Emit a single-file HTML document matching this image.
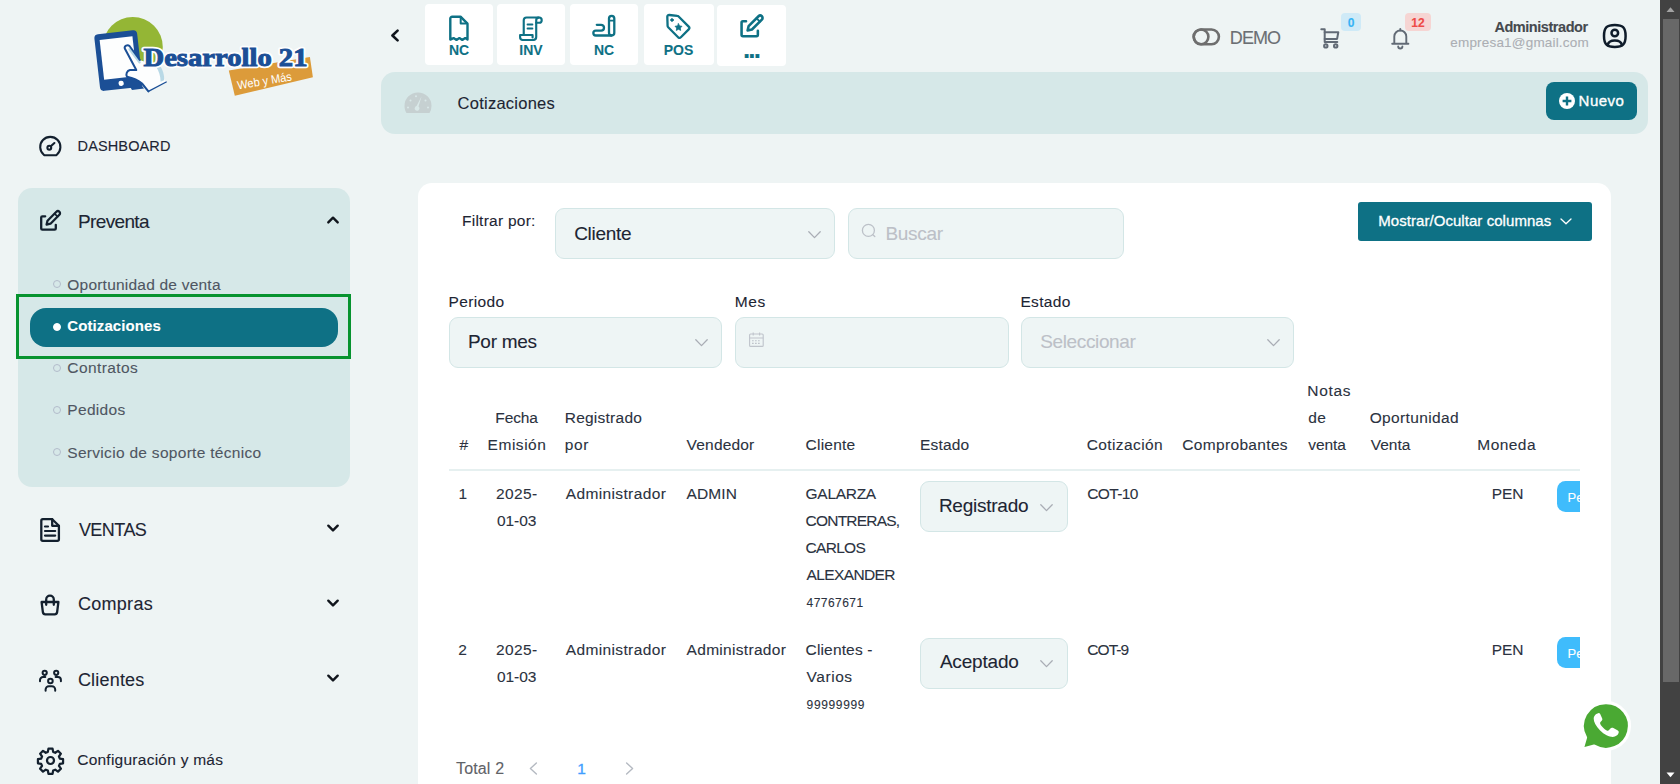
<!DOCTYPE html>
<html lang="es">
<head>
<meta charset="utf-8">
<title>Cotizaciones</title>
<style>
*{box-sizing:border-box;margin:0;padding:0}
html,body{width:1680px;height:784px;overflow:hidden}
body{background:#eef4f4;font-family:"Liberation Sans",sans-serif;color:#1b2433;position:relative;font-size:14px}
.abs{position:absolute}
svg{display:block}
.t{position:absolute;white-space:nowrap;line-height:1;-webkit-text-stroke:0.1px currentColor}
/* sidebar */
#grp{left:18px;top:188px;width:332px;height:299px;background:#d6e8e8;border-radius:14px}
.mi{font-size:17px;color:#1b2433;left:78px}
.sub{font-size:15px;color:#555e66;left:67px}
.dot{position:absolute;left:52.800px;width:8px;height:8px;border:1px solid #b3bccb;border-radius:50%}
#act{left:30px;top:307.500px;width:308.300px;height:39.300px;background:#0e7185;border-radius:16px}
#gbox{left:16px;top:294px;width:335px;height:65px;border:3px solid #06932f}
/* top */
.qb{position:absolute;top:3.500px;width:68px;height:61px;background:#fff;border-radius:4px}
.qb .t{font-weight:bold;font-size:14px;color:#0e7185;left:0;width:68px;text-align:center;top:39px}
.qb svg{position:absolute;left:22px;top:10px}
#bar{left:381px;top:72px;width:1266.500px;height:62px;background:#d6e8e8;border-radius:14px}
#nuevo{left:1546px;top:82px;width:91px;height:38px;background:#0e7185;border-radius:8px}
/* card */
#card{left:418px;top:183px;width:1193px;height:620px;background:#fff;border-radius:14px}
.inp{position:absolute;height:51px;background:#eef5f5;border:1px solid #d3e6e6;border-radius:9px}
.inp .t{font-size:18px;top:16px;left:19px;color:#1b2433}
.inp .ph{color:#b9bec3}
.lbl{font-size:15px;color:#1b2433}
.th{font-size:14.5px;color:#2a3140;line-height:27px;position:absolute;white-space:nowrap}
.td{font-size:14.5px;color:#2a3140;line-height:27px;position:absolute;white-space:nowrap}
.sm{font-size:11px}
.tag{position:absolute;left:1556.500px;width:23.500px;height:31px;background:#3fbcfc;border-radius:8.500px 0 0 8.500px;overflow:hidden}
.tag .t{color:#fff;font-size:13px;left:11px;top:9.500px}
/* scrollbar */
#sb{left:1660px;top:0;width:20px;height:784px;background:#424242}
#sbt{left:1662.500px;top:19px;width:16px;height:662.500px;background:#686868}
</style>
</head>
<body>
<!-- SIDEBAR -->
<svg class="abs" style="left:80px;top:8px" width="250" height="100" viewBox="0 0 250 100">
<circle cx="52.800" cy="39" r="30" fill="#94b635"/>
<g transform="rotate(-6.5 39 52)">
<rect x="17" y="24" width="43" height="57" rx="4" fill="#1b4f96"/>
<rect x="22" y="30" width="33" height="40" fill="#fdfefe"/>
<circle cx="38.5" cy="75.5" r="2.6" fill="#fff"/>
</g>
<path d="M44.800 40.500C44 38 47.500 36.300 49.500 38L59.800 52L77 58L86.200 74L68.400 83.400L62 75.500C58 72 52 69.800 47 68.800C45.500 66 47 62.500 50 62L56.300 62Z" fill="#fdfefe"/>
<path d="M76 58.500L80 57.400C83 62 84.500 67 84.200 72.200L80.600 73.800C80.500 68 79 63 76 58.500Z" fill="#b9d9e6"/>
<path d="M49.600 41.200L59.500 54.300" stroke="#b9d9e6" stroke-width="2.400" stroke-linecap="round"/>
<path d="M59.800 52L49.500 38C47.500 36.300 44 38 44.800 40.500L56.300 62L50 62C47 62.500 45.500 66 47 68.800C52 69.800 58 72 62 75.500L68.400 83.400" fill="none" stroke="#1b4f96" stroke-width="2" stroke-linejoin="round" stroke-linecap="round"/>
<path d="M68.400 83.400L86.200 74" fill="none" stroke="#1b4f96" stroke-width="1.300" stroke-linecap="round"/>
<path d="M47.500 69.500C53 70.500 58 73 61 76.500L64 80.500L52 82L46 72Z" fill="#1b4f96"/>
<polygon points="148.8,62.5 229.9,49.1 232.9,69.2 154.8,87.8" fill="#dc9b3a"/>
<text x="63.5" y="57.8" font-family="'Liberation Serif',serif" font-weight="bold" font-size="26" fill="#fdfefe" stroke="#fdfefe" stroke-width="4.5" stroke-linejoin="round" textLength="164" lengthAdjust="spacingAndGlyphs">Desarrollo 21</text>
<text x="63.5" y="57.8" font-family="'Liberation Serif',serif" font-weight="bold" font-size="26" fill="#1b4f96" stroke="#1b4f96" stroke-width="1" textLength="164" lengthAdjust="spacingAndGlyphs">Desarrollo 21</text>
<text transform="translate(158 81.5) rotate(-9.5)" font-family="'Liberation Sans',sans-serif" font-size="12" fill="#fff" textLength="55" lengthAdjust="spacingAndGlyphs">Web y Más</text>
</svg>
<div id="grp" class="abs"></div>
<div class="dot" style="top:280.300px"></div>
<div id="gbox" class="abs"></div>
<div id="act" class="abs"></div>
<div class="dot" style="top:322.600px;background:#fff;border-color:#fff"></div>
<div class="dot" style="top:364.300px"></div>
<div class="dot" style="top:406.300px"></div>
<div class="dot" style="top:448.300px"></div>


<!-- sidebar icons -->
<svg class="abs" style="left:38px;top:134px" width="24" height="24" viewBox="0 0 24 24" fill="none" stroke="#13202e" stroke-width="2.1" stroke-linecap="round" stroke-linejoin="round">
<path d="M7.2 21.3h10.2c.6 0 1-.2 1.4-.6a10.1 10.1 0 1 0-13 0c.4.4.8.6 1.4.6z"/>
<circle cx="11.3" cy="13.7" r="1.9"/><path d="M12.8 12.3l3.6-3.3"/>
</svg>
<svg class="abs" style="left:38px;top:208px" width="26" height="26" viewBox="0 0 26 26" fill="none" stroke="#13202e" stroke-width="2.3" stroke-linecap="round" stroke-linejoin="round">
<path d="M7.2 8.3H4.4a1.2 1.2 0 0 0-1.2 1.2v11a1.2 1.2 0 0 0 1.2 1.2h12.2a1.2 1.2 0 0 0 1.200-1.2v-3.700"/>
<path d="M8.600 16.600l.9-3.900 8.900-8.900a2.100 2.100 0 0 1 3 3l-8.900 8.900z"/>
<path d="M16.600 5.600l3 3" stroke-width="1.600"/>
</svg>
<svg class="abs" style="left:38px;top:516px" width="24" height="28" viewBox="0 0 24 28" fill="none" stroke="#13202e" stroke-width="2.3" stroke-linecap="round" stroke-linejoin="round">
<path d="M14.200 3.200H4.800a1.500 1.500 0 0 0-1.500 1.500v18.600a1.500 1.500 0 0 0 1.500 1.500h14.600a1.500 1.500 0 0 0 1.500-1.500V9.800z"/>
<path d="M14.200 3.200v6.600h6.700"/>
<path d="M7 10.500h3M7 15h10.200M7 19.600h10.200" stroke-width="2.200"/>
</svg>
<svg class="abs" style="left:38px;top:592px" width="24" height="26" viewBox="0 0 24 26" fill="none" stroke="#13202e" stroke-width="2.300" stroke-linecap="round" stroke-linejoin="round">
<path d="M3.600 10h16.800l-1.300 10.300a2.500 2.500 0 0 1-2.500 2.100H7.400a2.500 2.500 0 0 1-2.500-2.100z"/>
<path d="M8.200 12.800V7.400a3.800 3.800 0 0 1 7.600 0v5.400"/>
</svg>
<svg class="abs" style="left:37px;top:667px" width="27" height="27" viewBox="0 0 27 27" fill="none" stroke="#13202e" stroke-width="2" stroke-linecap="round" stroke-linejoin="round">
<circle cx="7.700" cy="5.800" r="2.100"/><circle cx="19.200" cy="5.800" r="2.100"/><circle cx="13.400" cy="14" r="2.300"/>
<path d="M3 14.300v-1.200a3 3 0 0 1 3-3h2.300M23.900 14.300v-1.200a3 3 0 0 0-3-3h-2.300M8.600 23.800v-1.300a3.300 3.300 0 0 1 3.300-3.300h3a3.300 3.300 0 0 1 3.300 3.300v1.300"/>
</svg>
<svg class="abs" style="left:36px;top:746px" width="29" height="29" viewBox="0 0 24 24" fill="none" stroke="#13202e" stroke-width="1.850" stroke-linecap="round" stroke-linejoin="round">
<circle cx="12" cy="12" r="2.900"/>
<path d="M10.300 2.200h3.400l.5 2.700 1.700.7 2.300-1.600 2.400 2.400-1.600 2.300.7 1.700 2.700.5v3.400l-2.700.5-.7 1.700 1.600 2.300-2.400 2.400-2.300-1.600-1.700.7-.5 2.700h-3.400l-.5-2.700-1.700-.7-2.300 1.600-2.400-2.400 1.600-2.300-.7-1.700-2.700-.5v-3.400l2.700-.5.7-1.700-1.600-2.300 2.400-2.400 2.300 1.600 1.700-.7z"/>
</svg>
<!-- chevrons -->
<svg class="abs" style="left:326px;top:215px" width="14" height="10" viewBox="0 0 14 10" fill="none" stroke="#10151c" stroke-width="2.400" stroke-linecap="round" stroke-linejoin="round"><path d="M2.300 7.400L7 2.700l4.700 4.700"/></svg>
<svg class="abs" style="left:326px;top:523px" width="14" height="10" viewBox="0 0 14 10" fill="none" stroke="#10151c" stroke-width="2.400" stroke-linecap="round" stroke-linejoin="round"><path d="M2.300 2.700L7 7.400l4.700-4.700"/></svg>
<svg class="abs" style="left:326px;top:598px" width="14" height="10" viewBox="0 0 14 10" fill="none" stroke="#10151c" stroke-width="2.400" stroke-linecap="round" stroke-linejoin="round"><path d="M2.300 2.700L7 7.400l4.700-4.700"/></svg>
<svg class="abs" style="left:326px;top:673px" width="14" height="10" viewBox="0 0 14 10" fill="none" stroke="#10151c" stroke-width="2.400" stroke-linecap="round" stroke-linejoin="round"><path d="M2.300 2.700L7 7.400l4.700-4.700"/></svg>
<svg class="abs" style="left:388.500px;top:28.300px" width="12" height="15" viewBox="0 0 12 15" fill="none" stroke="#10151c" stroke-width="2.600" stroke-linecap="round" stroke-linejoin="round"><path d="M8.600 2.600L3.400 7.500l5.200 4.900"/></svg>

<!-- TOPBAR -->
<div class="qb" style="left:425px"><svg width="24" height="29" viewBox="0 0 24 29" style="left:22px;top:9px" fill="none" stroke="#0e7185" stroke-width="2.400" stroke-linejoin="round" stroke-linecap="round"><path d="M3.300 26.600V5.600a1.900 1.900 0 0 1 1.900-1.900h8.300l7 7v15.900l-2.300-1.500-2.900 1.800-2.900-1.800-2.900 1.800-2.900-1.800z"/><path d="M13.700 4.200v6.300h6.300" stroke-width="2"/></svg><div class="t">NC</div></div>
<div class="qb" style="left:497px"><svg width="28" height="27" viewBox="0 0 30 29" style="left:20px;top:10px" fill="none" stroke="#0e7185" stroke-width="2.300" stroke-linejoin="round" stroke-linecap="round"><path d="M7.200 22.600V6.800a3 3 0 0 1 3-3h13.500a2.800 2.800 0 0 1 0 5.600h-3.100v15.400a3.100 3.100 0 0 1-3.100 3.100H6.200a2.900 2.900 0 0 1-2.900-2.900v-2.400h13.400v2.600"/><path d="M20.600 9.400V6.600a2.700 2.700 0 0 1 2.600-2.700"/><path d="M11.300 11.200h5.200M11.300 15.600h5.200" stroke-width="2.100"/></svg><div class="t">INV</div></div>
<div class="qb" style="left:570px"><svg width="28" height="28" viewBox="0 0 28 28" style="left:19.700px;top:5px" fill="none" stroke="#0e7185" stroke-width="2.300" stroke-linejoin="round" stroke-linecap="round"><rect x="19" y="6.900" width="5.300" height="19.600" rx="2.650"/><path d="M19.300 11.600h4.700" stroke-width="1.800"/><path d="M6.800 15.800h4.300a2.900 2.900 0 0 1 0 5.800H5.800a2.450 2.450 0 0 0 0 4.900h15.500"/></svg><div class="t">NC</div></div>
<div class="qb" style="left:643.500px;width:70px"><svg width="30" height="30" viewBox="0 0 30 30" style="left:19.500px;top:5.700px" fill="none" stroke="#0e7185" stroke-width="2.300" stroke-linejoin="round" stroke-linecap="round"><path d="M4.300 7.800l.300 9.200a2 2 0 0 0 .6 1.300l9.900 9.900a2 2 0 0 0 2.800 0l7.800-7.800a2 2 0 0 0 0-2.800L15.600 7.500a2 2 0 0 0-1.300-.6l-8-.900a1.800 1.800 0 0 0-2 1.800z"/><circle cx="9" cy="11" r="1.300" fill="#0e7185" stroke-width="1"/><path d="M15.500 14.700l1.100 2.200 2.400.4-1.700 1.700.4 2.400-2.200-1.100-2.200 1.100.4-2.400-1.700-1.700 2.400-.4z" fill="#0e7185" stroke-width="0.800"/></svg><div class="t" style="width:70px">POS</div></div>
<div class="qb" style="left:717.300px;top:4.500px;width:68.500px;height:61.500px"><svg width="29" height="29" viewBox="0 0 26 26" style="left:20.800px;top:7.300px" fill="none" stroke="#0e7185" stroke-width="2.300" stroke-linecap="round" stroke-linejoin="round"><path d="M7.200 8.300H4.400a1.200 1.200 0 0 0-1.200 1.200v11a1.200 1.200 0 0 0 1.200 1.200h12.200a1.200 1.200 0 0 0 1.200-1.200v-3.700"/><path d="M8.600 16.600l.9-3.900 8.900-8.900a2.100 2.100 0 0 1 3 3l-8.900 8.900z"/><path d="M16.600 5.600l3 3" stroke-width="1.600"/></svg><div class="t" style="top:31px;font-size:26px;letter-spacing:-1.900px;text-indent:-0.500px">...</div></div>
<div class="abs" style="left:1341px;top:13px;width:20px;height:18px;background:#cfeaf7;border-radius:4px"></div>
<div class="t" style="left:1341px;width:20px;text-align:center;top:16.500px;font-size:12px;font-weight:bold;color:#36b3f5">0</div>
<div class="abs" style="left:1405px;top:13px;width:26px;height:18px;background:#f6d5d3;border-radius:4px"></div>
<div class="t" style="left:1405px;width:26px;text-align:center;top:16.500px;font-size:12px;font-weight:bold;color:#ee4b47">12</div>

<div id="bar" class="abs"></div>
<svg class="abs" style="left:1190px;top:26px" width="32" height="22" viewBox="0 0 32 22" fill="none" stroke="#6e6e6e" stroke-width="2.600"><rect x="3.700" y="3.500" width="25.200" height="14.700" rx="7.350"/><circle cx="11.050" cy="10.850" r="7.350"/></svg>
<svg class="abs" style="left:1318px;top:26px" width="24" height="24" viewBox="0 0 24 24" fill="none" stroke="#616a75" stroke-width="2" stroke-linecap="round" stroke-linejoin="round"><path d="M3.300 3.300h3.400v12.800h12.600"/><path d="M6.700 6.200h13.600l-1.200 6.700H6.700"/><circle cx="7.800" cy="19.900" r="1.700"/><circle cx="17.700" cy="19.900" r="1.700"/></svg>
<svg class="abs" style="left:1388px;top:26px" width="24" height="24" viewBox="0 0 24 24" fill="none" stroke="#616a75" stroke-width="1.900" stroke-linecap="round" stroke-linejoin="round"><path d="M4.200 17.800h16.200M6.300 17.800v-7.300a6 6 0 0 1 12 0v7.300"/><path d="M10.200 20.400a2.100 2.100 0 0 0 4.200 0"/><path d="M12.300 4.400V2.900"/></svg>
<svg class="abs" style="left:1600px;top:20.500px" width="30" height="30" viewBox="0 0 30 30" fill="none" stroke="#0f1c2a" stroke-width="2.500" stroke-linecap="round" stroke-linejoin="round"><path d="M14.800 3.900c3.600 0 6.300.3 8.300 2.300s2.500 4.800 2.500 8.700-.5 6.700-2.500 8.700-4.700 2.300-8.300 2.300-6.300-.3-8.300-2.300S4 18.800 4 14.900s.5-6.700 2.500-8.700 4.700-2.300 8.300-2.300z"/><circle cx="14.800" cy="12" r="3.300"/><path d="M7.700 23.900c.6-3 3.400-4.500 7.100-4.500s6.500 1.500 7.100 4.500"/></svg>
<svg class="abs" style="left:402px;top:90px" width="32" height="26" viewBox="0 0 32 26" fill="#c6d0d1"><path d="M16 2.400A13.500 13.500 0 0 0 2.500 15.900c0 2.600.7 5 2 7.100h23a13.400 13.400 0 0 0 2-7.100A13.500 13.500 0 0 0 16 2.400z"/><path d="M19.500 6.500l-3 10a2.400 2.400 0 1 1-2-.4z" fill="#d9e8e8"/><g fill="#d9e8e8"><circle cx="6" cy="17.500" r="1"/><circle cx="26" cy="17.500" r="1"/><circle cx="8.500" cy="10.500" r="1"/><circle cx="23.500" cy="10.500" r="1"/><circle cx="14" cy="6.300" r="1"/></g></svg>

<div id="nuevo" class="abs"></div>
<svg class="abs" style="left:1558px;top:92px" width="18" height="18" viewBox="0 0 18 18"><circle cx="9" cy="9" r="8" fill="#fff"/><path d="M9 4.600v8.800M4.600 9h8.800" stroke="#0e7185" stroke-width="2.400"/></svg>


<!-- CARD -->
<div id="card" class="abs"></div>
<div class="inp" style="left:555px;top:208px;width:280px"></div>
<div class="inp" style="left:848px;top:208px;width:276px"></div>
<div class="abs" style="left:1358px;top:201.500px;width:234px;height:39.500px;background:#0e7185;border-radius:3px"></div>

<div class="inp" style="left:449px;top:316.500px;width:273px"></div>
<div class="inp" style="left:735px;top:316.500px;width:274px"></div>
<div class="inp" style="left:1021px;top:316.500px;width:273px"></div>

<!-- table head -->
<div class="abs" style="left:449px;top:469px;width:1131px;height:2px;background:#e6f0f0"></div>

<!-- row 1 -->
<div class="inp" style="left:920px;top:481px;width:148px"></div>
<div class="tag" style="top:481px"><div class="t">Pe</div></div>
<!-- row 2 -->
<div class="inp" style="left:920px;top:637.500px;width:148px"></div>
<div class="tag" style="top:637px"><div class="t">Pe</div></div>


<svg class="abs" style="left:1559px;top:214px" width="14" height="14" viewBox="0 0 14 14" fill="none" stroke="#fff" stroke-width="1.300" stroke-linecap="round" stroke-linejoin="round"><path d="M2 5l5 4.800L12 5"/></svg>
<div class="t" id="dash" style="left:77.60px;top:139.0px;font-size:14.5px;color:#1d2533;letter-spacing:0.117px">DASHBOARD</div>
<div class="t" id="prev" style="left:78.00px;top:212.0px;font-size:19px;color:#1d2533;letter-spacing:-0.639px">Preventa</div>
<div class="t" id="s1" style="left:67.30px;top:277.0px;font-size:15.5px;color:#4f5662;letter-spacing:0.217px">Oportunidad de venta</div>
<div class="t" id="s2" style="left:67.30px;top:318.0px;font-size:15px;color:#fff;letter-spacing:0.089px;font-weight:bold">Cotizaciones</div>
<div class="t" id="s3" style="left:67.30px;top:360.0px;font-size:15.5px;color:#4f5662;letter-spacing:0.406px">Contratos</div>
<div class="t" id="s4" style="left:67.30px;top:402.0px;font-size:15.5px;color:#4f5662;letter-spacing:0.315px">Pedidos</div>
<div class="t" id="s5" style="left:67.30px;top:445.0px;font-size:15.5px;color:#4f5662;letter-spacing:0.298px">Servicio de soporte técnico</div>
<div class="t" id="ven" style="left:78.90px;top:521.0px;font-size:18px;color:#1d2533;letter-spacing:-0.540px">VENTAS</div>
<div class="t" id="com" style="left:77.90px;top:595.0px;font-size:18px;color:#1d2533;letter-spacing:0.300px">Compras</div>
<div class="t" id="cli" style="left:77.90px;top:671.0px;font-size:18px;color:#1d2533;letter-spacing:0.196px">Clientes</div>
<div class="t" id="cfg" style="left:77.20px;top:752.0px;font-size:15.5px;color:#1d2533;letter-spacing:0.250px">Configuración y más</div>
<div class="t" id="demo" style="left:1229.80px;top:29.0px;font-size:18px;color:#6b6f73;letter-spacing:-0.900px">DEMO</div>
<div class="t" id="adm" style="left:1494.40px;top:20.0px;font-size:14.5px;color:#45494e;letter-spacing:-0.450px;font-weight:bold">Administrador</div>
<div class="t" id="mail" style="left:1450.30px;top:36.0px;font-size:13.5px;color:#abaeb3;letter-spacing:0.184px">empresa1@gmail.com</div>
<div class="t" id="bc" style="left:457.60px;top:95.0px;font-size:16.5px;color:#1d2533;letter-spacing:0.242px">Cotizaciones</div>
<div class="t" id="nue" style="left:1578.60px;top:93.0px;font-size:15px;color:#fff;letter-spacing:0.450px;-webkit-text-stroke:0.35px #fff">Nuevo</div>
<div class="t" id="fil" style="left:462.00px;top:213.0px;font-size:15.5px;color:#1d2533;letter-spacing:0.248px">Filtrar por:</div>
<div class="t" id="icl" style="left:574.20px;top:224.0px;font-size:19px;color:#1d2533;letter-spacing:-0.300px">Cliente</div>
<div class="t" id="ibu" style="left:885.40px;top:224.0px;font-size:19px;color:#bcc0c7;letter-spacing:-0.270px">Buscar</div>
<div class="t" id="most" style="left:1378.20px;top:213.0px;font-size:15px;color:#fff;letter-spacing:0.058px;-webkit-text-stroke:0.3px #fff">Mostrar/Ocultar columnas</div>
<div class="t" id="lper" style="left:448.50px;top:294.0px;font-size:15.5px;color:#1d2533;letter-spacing:0.375px">Periodo</div>
<div class="t" id="lmes" style="left:734.70px;top:294.0px;font-size:15.5px;color:#1d2533;letter-spacing:0.675px">Mes</div>
<div class="t" id="lest" style="left:1020.40px;top:294.0px;font-size:15.5px;color:#1d2533;letter-spacing:0.360px">Estado</div>
<div class="t" id="ipm" style="left:468.00px;top:332.0px;font-size:19px;color:#1d2533;letter-spacing:-0.300px">Por mes</div>
<div class="t" id="isel" style="left:1040.20px;top:332.0px;font-size:19px;color:#bcc0c7;letter-spacing:-0.360px">Seleccionar</div>
<div class="t" id="h0" style="left:459.40px;top:437.0px;font-size:15.5px;color:#2b3240;letter-spacing:0.000px">#</div>
<div class="t" id="h1a" style="left:495.30px;top:410.0px;font-size:15.5px;color:#2b3240;letter-spacing:-0.120px">Fecha</div>
<div class="t" id="h1b" style="left:487.60px;top:437.0px;font-size:15.5px;color:#2b3240;letter-spacing:0.525px">Emisión</div>
<div class="t" id="h2a" style="left:564.70px;top:410.0px;font-size:15.5px;color:#2b3240;letter-spacing:0.250px">Registrado</div>
<div class="t" id="h2b" style="left:564.70px;top:437.0px;font-size:15.5px;color:#2b3240;letter-spacing:0.675px">por</div>
<div class="t" id="h3" style="left:686.60px;top:437.0px;font-size:15.5px;color:#2b3240;letter-spacing:0.189px">Vendedor</div>
<div class="t" id="h4" style="left:805.60px;top:437.0px;font-size:15.5px;color:#2b3240;letter-spacing:0.225px">Cliente</div>
<div class="t" id="h5" style="left:920.00px;top:437.0px;font-size:15.5px;color:#2b3240;letter-spacing:0.180px">Estado</div>
<div class="t" id="h6" style="left:1086.70px;top:437.0px;font-size:15.5px;color:#2b3240;letter-spacing:0.400px">Cotización</div>
<div class="t" id="h7" style="left:1182.30px;top:437.0px;font-size:15.5px;color:#2b3240;letter-spacing:0.330px">Comprobantes</div>
<div class="t" id="h8a" style="left:1307.30px;top:383.0px;font-size:15.5px;color:#2b3240;letter-spacing:0.675px">Notas</div>
<div class="t" id="h8b" style="left:1308.30px;top:410.0px;font-size:15.5px;color:#2b3240;letter-spacing:0.450px">de</div>
<div class="t" id="h8c" style="left:1308.30px;top:437.0px;font-size:15.5px;color:#2b3240;letter-spacing:-0.105px">venta</div>
<div class="t" id="h9a" style="left:1369.70px;top:410.0px;font-size:15.5px;color:#2b3240;letter-spacing:0.360px">Oportunidad</div>
<div class="t" id="h9b" style="left:1370.70px;top:437.0px;font-size:15.5px;color:#2b3240;letter-spacing:0.000px">Venta</div>
<div class="t" id="h10" style="left:1477.30px;top:437.0px;font-size:15.5px;color:#2b3240;letter-spacing:0.450px">Moneda</div>
<div class="t" id="r1n" style="left:458.40px;top:486.0px;font-size:15.5px;color:#2b3240;letter-spacing:0.000px">1</div>
<div class="t" id="r1d1" style="left:496.10px;top:486.0px;font-size:15.5px;color:#2b3240;letter-spacing:0.344px">2025-</div>
<div class="t" id="r1d2" style="left:497.10px;top:513.0px;font-size:15.5px;color:#2b3240;letter-spacing:-0.107px">01-03</div>
<div class="t" id="r1a" style="left:565.70px;top:486.0px;font-size:15.5px;color:#2b3240;letter-spacing:0.375px">Administrador</div>
<div class="t" id="r1v" style="left:686.60px;top:486.0px;font-size:15.5px;color:#2b3240;letter-spacing:0.105px">ADMIN</div>
<div class="t" id="r1c1" style="left:805.60px;top:486.0px;font-size:15.5px;color:#2b3240;letter-spacing:-0.300px">GALARZA</div>
<div class="t" id="r1c2" style="left:805.60px;top:513.0px;font-size:15.5px;color:#2b3240;letter-spacing:-0.800px">CONTRERAS,</div>
<div class="t" id="r1c3" style="left:805.60px;top:540.0px;font-size:15.5px;color:#2b3240;letter-spacing:-0.720px">CARLOS</div>
<div class="t" id="r1c4" style="left:806.60px;top:567.0px;font-size:15.5px;color:#2b3240;letter-spacing:-0.619px">ALEXANDER</div>
<div class="t" id="r1c5" style="left:806.60px;top:597.0px;font-size:12px;color:#2b3240;letter-spacing:0.451px">47767671</div>
<div class="t" id="r1s" style="left:938.90px;top:496.0px;font-size:19px;color:#1d2533;letter-spacing:-0.250px">Registrado</div>
<div class="t" id="r1q" style="left:1087.20px;top:486.0px;font-size:15.5px;color:#2b3240;letter-spacing:-0.630px">COT-10</div>
<div class="t" id="r1m" style="left:1491.70px;top:486.0px;font-size:15.5px;color:#2b3240;letter-spacing:-0.000px">PEN</div>
<div class="t" id="r2n" style="left:458.20px;top:642.0px;font-size:15.5px;color:#2b3240;letter-spacing:0.000px">2</div>
<div class="t" id="r2d1" style="left:496.10px;top:642.0px;font-size:15.5px;color:#2b3240;letter-spacing:0.344px">2025-</div>
<div class="t" id="r2d2" style="left:497.10px;top:669.0px;font-size:15.5px;color:#2b3240;letter-spacing:-0.107px">01-03</div>
<div class="t" id="r2a" style="left:565.70px;top:642.0px;font-size:15.5px;color:#2b3240;letter-spacing:0.375px">Administrador</div>
<div class="t" id="r2v" style="left:686.60px;top:642.0px;font-size:15.5px;color:#2b3240;letter-spacing:0.300px">Administrador</div>
<div class="t" id="r2c1" style="left:805.60px;top:642.0px;font-size:15.5px;color:#2b3240;letter-spacing:0.150px">Clientes -</div>
<div class="t" id="r2c2" style="left:806.60px;top:669.0px;font-size:15.5px;color:#2b3240;letter-spacing:0.540px">Varios</div>
<div class="t" id="r2c3" style="left:806.60px;top:699.0px;font-size:12px;color:#2b3240;letter-spacing:0.642px">99999999</div>
<div class="t" id="r2s" style="left:939.90px;top:652.0px;font-size:19px;color:#1d2533;letter-spacing:-0.191px">Aceptado</div>
<div class="t" id="r2q" style="left:1087.20px;top:642.0px;font-size:15.5px;color:#2b3240;letter-spacing:-0.900px">COT-9</div>
<div class="t" id="r2m" style="left:1491.70px;top:642.0px;font-size:15.5px;color:#2b3240;letter-spacing:-0.000px">PEN</div>
<div class="t" id="tot" style="left:456.00px;top:761.0px;font-size:16px;color:#5f6368;letter-spacing:0.150px">Total 2</div>
<div class="t" id="pg1" style="left:577.30px;top:761.0px;font-size:15.5px;color:#409eff;letter-spacing:0.000px;-webkit-text-stroke:0.3px #409eff">1</div>
<!-- scrollbar -->
<div id="sb" class="abs"></div>
<div id="sbt" class="abs"></div>
<svg class="abs" style="left:807.7px;top:231px" width="13" height="7.5" viewBox="0 0 13 7.5" fill="none" stroke="#a9adb5" stroke-width="1.3" stroke-linecap="round" stroke-linejoin="round"><path d="M0.800 0.800L6.5 6.6L12.2 0.800"/></svg>
<svg class="abs" style="left:694.6px;top:339px" width="13" height="7.5" viewBox="0 0 13 7.5" fill="none" stroke="#a9adb5" stroke-width="1.3" stroke-linecap="round" stroke-linejoin="round"><path d="M0.800 0.800L6.5 6.6L12.2 0.800"/></svg>
<svg class="abs" style="left:1267px;top:339px" width="13" height="7.5" viewBox="0 0 13 7.5" fill="none" stroke="#a9adb5" stroke-width="1.3" stroke-linecap="round" stroke-linejoin="round"><path d="M0.800 0.800L6.5 6.6L12.2 0.800"/></svg>
<svg class="abs" style="left:1040.3px;top:504.2px" width="13" height="7.5" viewBox="0 0 13 7.5" fill="none" stroke="#a9adb5" stroke-width="1.3" stroke-linecap="round" stroke-linejoin="round"><path d="M0.800 0.800L6.5 6.6L12.2 0.800"/></svg>
<svg class="abs" style="left:1040.3px;top:660.2px" width="13" height="7.5" viewBox="0 0 13 7.5" fill="none" stroke="#a9adb5" stroke-width="1.3" stroke-linecap="round" stroke-linejoin="round"><path d="M0.800 0.800L6.5 6.6L12.2 0.800"/></svg>
<svg class="abs" style="left:861px;top:223px" width="17" height="16" viewBox="0 0 17 16" fill="none" stroke="#bcc1c8" stroke-width="1.300" stroke-linecap="round"><circle cx="7.400" cy="7.400" r="6"/><path d="M11.900 11.700l1.900 1.800"/></svg>
<svg class="abs" style="left:748px;top:331px" width="17" height="17" viewBox="0 0 17 17" fill="none" stroke="#bfc4cb" stroke-width="1.100"><rect x="1.600" y="3" width="13.600" height="12.400" rx="1"/><path d="M1.600 7h13.600M5.200 1.400v3.200M11.600 1.400v3.200" /><path d="M4 9.700h9M4 12.400h9" stroke-width="1.100" stroke-dasharray="1.700 1.300"/></svg>
<svg class="abs" style="left:529px;top:762px" width="9" height="13" viewBox="0 0 9 13" fill="none" stroke="#b4b9c1" stroke-width="1.400" stroke-linecap="round" stroke-linejoin="round"><path d="M7.400 1L1.400 6.500l6 5.500"/></svg>
<svg class="abs" style="left:625px;top:762px" width="9" height="13" viewBox="0 0 9 13" fill="none" stroke="#b4b9c1" stroke-width="1.400" stroke-linecap="round" stroke-linejoin="round"><path d="M1.600 1l6 5.500-6 5.500"/></svg>
<svg class="abs" style="left:1577px;top:697.200px" width="59.600" height="59.600" viewBox="0 0 56 56"><path d="M27 5.200a22 22 0 0 0-19 33l-3.200 11 11.400-3A22 22 0 1 0 27 5.200z" fill="#4aa933" stroke="#fff" stroke-width="3" stroke-linejoin="round"/><path d="M19.300 15.500c-1.500.2-3.600 2.300-3.600 5 0 2.900 1.900 6.800 5.800 10.700 4.100 4.100 8.700 6.300 12.100 6.300 2.700 0 5.200-1.900 5.600-4.100.2-1-.3-1.700-1.200-2.200l-4.300-2.200c-.9-.4-1.700-.2-2.300.5l-1.500 1.800c-.4.500-1 .6-1.600.3-1.600-.7-5.300-3.600-6.500-6.500-.2-.6-.1-1.100.3-1.500l1.300-1.500c.5-.6.600-1.300.3-2l-1.900-4.100c-.5-.9-1.400-1.600-2.500-.500z" fill="#fff"/></svg>
<svg class="abs" style="left:1660px;top:0" width="20" height="19" viewBox="0 0 20 19"><path d="M6.500 12l4-4.700 4 4.700z" fill="#a3a3a3"/></svg>
<svg class="abs" style="left:1660px;top:765px" width="20" height="19" viewBox="0 0 20 19"><path d="M6.500 7.500l4 4.700 4-4.700z" fill="#fff"/></svg>
</body>
</html>
